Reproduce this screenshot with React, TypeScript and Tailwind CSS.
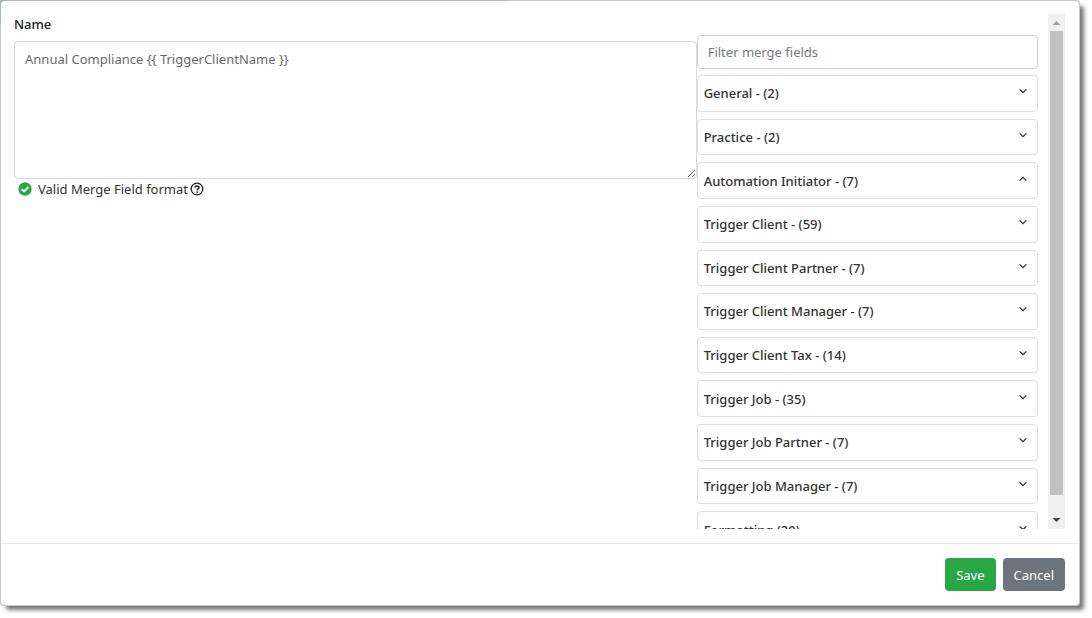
import React, { useState } from 'react';

interface MergeGroup {
  name: string;
  count: string;
}

const groups: MergeGroup[] = [
  { name: 'General', count: '- (2)' },
  { name: 'Practice', count: '- (2)' },
  { name: 'Automation Initiator', count: '- (7)' },
  { name: 'Trigger Client', count: '- (59)' },
  { name: 'Trigger Client Partner', count: '- (7)' },
  { name: 'Trigger Client Manager', count: '- (7)' },
  { name: 'Trigger Client Tax', count: '- (14)' },
  { name: 'Trigger Job', count: '- (35)' },
  { name: 'Trigger Job Partner', count: '- (7)' },
  { name: 'Trigger Job Manager', count: '- (7)' },
  { name: 'Formatting', count: '(20)' },
];

const Chevron: React.FC<{ open: boolean }> = ({ open }) => (
  <svg
    viewBox="0 0 8 8"
    className="mb-1 h-2 w-2 shrink-0"
    fill="none"
    stroke="#333"
    strokeWidth="1.3"
    aria-hidden="true"
  >
    <path d={open ? 'M0.6 5.6 L4 2.4 L7.4 5.6' : 'M0.6 2.4 L4 5.6 L7.4 2.4'} />
  </svg>
);

const ValidIcon: React.FC = () => (
  <svg viewBox="0 0 14 14" className="h-[14px] w-[14px]" aria-hidden="true">
    <circle cx="7" cy="7" r="6.7" fill="#28a745" />
    <path d="M3.6 7.2 L6.1 9.5 L10.4 5" fill="none" stroke="#fff" strokeWidth="1.9" />
  </svg>
);

const HelpIcon: React.FC = () => (
  <svg viewBox="0 0 14 14" className="h-[14px] w-[14px]" fill="none" stroke="#222" aria-hidden="true">
    <circle cx="7" cy="7" r="5.8" strokeWidth="1.3" />
    <path d="M5 5.6 C5.1 3.3 9 3.4 9 5.5 C9 6.9 7.1 6.8 7.1 8.3" strokeWidth="1.5" />
    <circle cx="7.1" cy="10.1" r="0.9" fill="#222" stroke="none" />
  </svg>
);

const ScrollBar: React.FC = () => (
  <div className="flex w-[17px] flex-col items-center bg-[#f0f0f0]" aria-hidden="true">
    <svg viewBox="0 0 17 17" className="h-[17px] w-[17px] shrink-0">
      <path d="M4.5 11 L8.5 7 L12.5 11 Z" fill="#a0a0a0" />
    </svg>
    <div className="w-[13px] flex-1 bg-[#c1c1c1]" />
    <svg viewBox="0 0 17 34" className="h-[34px] w-[17px] shrink-0">
      <path d="M4.5 23 L8.5 27 L12.5 23 Z" fill="#444" />
    </svg>
  </div>
);

const App: React.FC = () => {
  const [name, setName] = useState('Annual Compliance {{ TriggerClientName }}');
  const [filter, setFilter] = useState('');
  const [open, setOpen] = useState('Automation Initiator');

  return (
    <div className="h-screen bg-white pr-3 pb-3 font-['Noto_Sans',sans-serif] text-[13px] leading-5 text-[#333]">
      <div className="relative h-full rounded bg-[#c9c9c9] p-px shadow-[5px_5px_4px_-1px_#777]">
        {/* page header showing behind the dialog */}
        <div className="absolute top-0 left-0 h-6 w-[47%] bg-[#b0b8c5]" />
        <div role="dialog" aria-label="Merge fields" className="relative flex h-full flex-col rounded bg-[#fefefe]">
          <div className="flex min-h-0 flex-1 gap-[10px] pt-[13px] pr-[14px] pb-[14px] pl-[13px]">
            <div className="grid min-w-0 flex-1 grid-cols-3 overflow-hidden">
              <div className="col-span-2">
                <label htmlFor="name" className="mb-[7px] block font-medium text-[#222]">
                  Name
                </label>
                <textarea
                  id="name"
                  value={name}
                  onChange={(e) => setName(e.target.value)}
                  className="block h-[138px] w-full rounded border border-[#d8d8d8] px-[10px] py-[7px] text-[#6a6a6a]"
                />
                <div className="flex items-center px-1">
                  <ValidIcon />
                  <span className="ml-[6px]">Valid Merge Field format</span>
                  <button type="button" aria-label="Help" className="ml-[2px]">
                    <HelpIcon />
                  </button>
                </div>
              </div>
              <div className="pt-[21px]">
                <input
                  type="text"
                  aria-label="Filter merge fields"
                  placeholder="Filter merge fields"
                  value={filter}
                  onChange={(e) => setFilter(e.target.value)}
                  className="mb-[6px] block h-[34px] w-full rounded border border-[#d0d3d6] px-[10px] placeholder:text-[#777c82]"
                />
                <ul className="grid h-[473px] auto-rows-fr gap-[7px]">
                  {groups.map((group) => (
                    <li key={group.name} className="rounded border border-[#e0e0e0]">
                      <button
                        type="button"
                        aria-expanded={open === group.name}
                        onClick={() => setOpen(open === group.name ? '' : group.name)}
                        className="flex h-full w-full items-center justify-between pr-[10px] pl-[6px] font-medium"
                      >
                        <span>
                          {group.name} {group.count}
                        </span>
                        <Chevron open={open === group.name} />
                      </button>
                    </li>
                  ))}
                </ul>
              </div>
            </div>
            <ScrollBar />
          </div>
          <div className="flex justify-end gap-[7px] border-t border-[#e6e6e6] px-[14px] py-[14px] text-white">
            <button type="button" className="h-[33px] rounded bg-[#28a745] px-[11px]">
              Save
            </button>
            <button type="button" className="h-[33px] rounded bg-[#6c757d] px-[11px]">
              Cancel
            </button>
          </div>
        </div>
      </div>
    </div>
  );
};

export default App;
